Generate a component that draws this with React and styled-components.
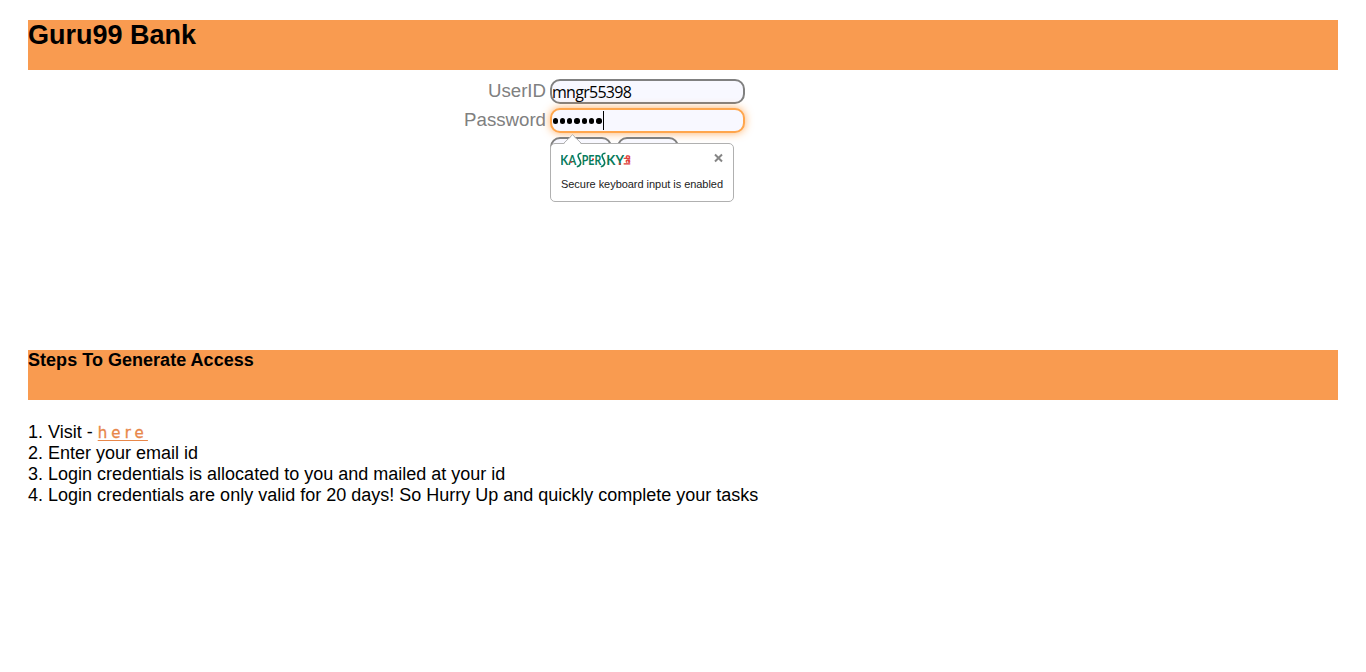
import React from "react";
import styled, { createGlobalStyle } from "styled-components";

const GlobalStyle = createGlobalStyle`
  body {
    margin: 0;
    background: #fff;
    color: #000;
    font: 18px/21px "Liberation Sans", Arial, sans-serif;
    overflow: hidden;
  }
`;

const Page = styled.main`
  box-sizing: border-box;
  height: 672px;
  padding: 20px 28px 0;
`;

const Banner = styled.header`
  height: 50px;
  background: #f99b50;
`;

const Title = styled.h1`
  margin: 0;
  font-size: 27px;
  line-height: 30px;
`;

const Subtitle = styled.h2`
  margin: 0;
  font-size: 18px;
  line-height: 20px;
  letter-spacing: 0.03px;
`;

const LoginForm = styled.form`
  display: grid;
  grid-template-columns: 518px 195px;
  grid-auto-rows: 25px;
  gap: 4px;
  height: 271px;
  padding-top: 9px;
`;

const Label = styled.label`
  color: #808080;
  font-size: 18.67px;
  line-height: 23px;
  text-align: right;
`;

const Field = styled.div`
  box-sizing: border-box;
  display: flex;
  align-items: center;
  border: 2px solid ${(p) => (p.$focused ? "#ffa64d" : "#808080")};
  border-radius: 10px;
  background: #f8f8ff;
  box-shadow: ${(p) => (p.$focused ? "0 0 8px rgba(255, 140, 30, 0.7)" : "none")};
`;

const FieldText = styled.span`
  padding-top: 2px;
  font: 16px/21px "Open Sans", "Noto Sans", sans-serif;
  letter-spacing: -0.72px;
`;

const Dots = styled.div`
  display: flex;
  gap: 1.9px;
  padding: 1px 1px 0 0.5px;
`;

const Dot = styled.i`
  width: 5.4px;
  height: 5.4px;
  border-radius: 50%;
  background: #000;
`;

const Caret = styled.i`
  width: 1px;
  height: 19px;
  background: #000;
`;

const ButtonCell = styled.div`
  position: relative;
  display: flex;
  grid-column: 2;
  gap: 5px;
`;

const Button = styled.div`
  box-sizing: border-box;
  width: 62px;
  height: 25px;
  border: 2px solid #808080;
  border-radius: 10px;
  background: #f8f8ff;
`;

const Popup = styled.aside`
  position: absolute;
  top: 6px;
  left: 0;
  box-sizing: border-box;
  width: 184px;
  height: 59px;
  padding: 8px 10px;
  border: 1px solid #b0b0b0;
  border-radius: 5px;
  background: #fff;
`;

const Pointer = styled.svg`
  position: absolute;
  top: -10px;
  left: 11px;
`;

const PopupHeader = styled.div`
  display: flex;
  justify-content: space-between;
  height: 25px;
`;

const PopupText = styled.p`
  margin: 0;
  color: #222;
  font-size: 11px;
  line-height: 14px;
  letter-spacing: -0.04px;
  white-space: nowrap;
`;

const Steps = styled.section`
  padding-top: 22px;
`;

const Step = styled.div`
  height: 21px;
  white-space: nowrap;
`;

const Link = styled.a`
  color: #e8874a;
  font: 15px/20px "DejaVu Sans", sans-serif;
  letter-spacing: 4.1px;
  -webkit-text-stroke: 0.3px #e8874a;
  text-decoration: underline;
  text-decoration-thickness: 1px;
  text-underline-offset: 2px;
`;

const LogoText = styled.text`
  fill: ${(p) => p.$color || "#087b5c"};
  font-family: Lato, sans-serif;
  font-weight: 700;
`;

function KasperskyLogo() {
  return (
    <svg width="72" height="16" viewBox="0 0 72 16">
      <LogoText x="-.8" y="12.7" fontSize="13" textLength="16" lengthAdjust="spacingAndGlyphs">KA</LogoText>
      <path d="M20.5 1.3C17 1.4 16.3 3.5 17.8 6L19.2 8.8C20.6 11.5 19 14 15.8 14.7" fill="none" stroke="#087b5c" strokeWidth="1.6" />
      <LogoText x="20.8" y="12.7" fontSize="13" textLength="19.5" lengthAdjust="spacingAndGlyphs">PER</LogoText>
      <path d="M44.5 1.3C41 1.4 40.3 3.5 41.8 6L43.2 8.8C44.6 11.5 43 14 39.8 14.7" fill="none" stroke="#087b5c" strokeWidth="1.6" />
      <LogoText x="45.3" y="12.7" fontSize="13" textLength="17.7" lengthAdjust="spacingAndGlyphs">KY</LogoText>
      <path d="M9.2 10h2M31 7.2h2M57.8 12h2" stroke="#e0342f" strokeWidth="1.6" />
      <LogoText $color="#dc2520" transform="translate(69 12.8) rotate(-90)" fontSize="7" textLength="9.5" lengthAdjust="spacingAndGlyphs" stroke="#dc2520" strokeWidth=".3">lab</LogoText>
    </svg>
  );
}

function SecureInputPopup() {
  return (
    <Popup>
      <Pointer width="22" height="11" viewBox="0 0 22 11">
        <path d="M1 11L10.5 1L20 11Z" fill="#fff" />
        <path d="M1 10L10.5 .7L20 10" fill="none" stroke="#b0b0b0" />
      </Pointer>
      <PopupHeader>
        <KasperskyLogo />
        <svg width="9" height="12" viewBox="0 0 9 12">
          <path d="M1 2.5L8 9.5M8 2.5L1 9.5" stroke="#858585" strokeWidth="2" />
        </svg>
      </PopupHeader>
      <PopupText>Secure keyboard input is enabled</PopupText>
    </Popup>
  );
}

export default function App() {
  return (
    <>
      <GlobalStyle />
      <Page>
        <Banner><Title>Guru99 Bank</Title></Banner>
        <LoginForm>
          <Label>UserID</Label>
          <Field><FieldText>mngr55398</FieldText></Field>
          <Label>Password</Label>
          <Field $focused>
            <Dots>{Array.from({ length: 7 }, (_, i) => <Dot key={i} />)}</Dots>
            <Caret />
          </Field>
          <ButtonCell>
            <Button />
            <Button />
            <SecureInputPopup />
          </ButtonCell>
        </LoginForm>
        <Banner><Subtitle>Steps To Generate Access</Subtitle></Banner>
        <Steps>
          <Step>1. Visit - <Link>here</Link></Step>
          <Step>2. Enter your email id</Step>
          <Step>3. Login credentials is allocated to you and mailed at your id</Step>
          <Step>4. Login credentials are only valid for 20 days! So Hurry Up and quickly complete your tasks</Step>
        </Steps>
      </Page>
    </>
  );
}
